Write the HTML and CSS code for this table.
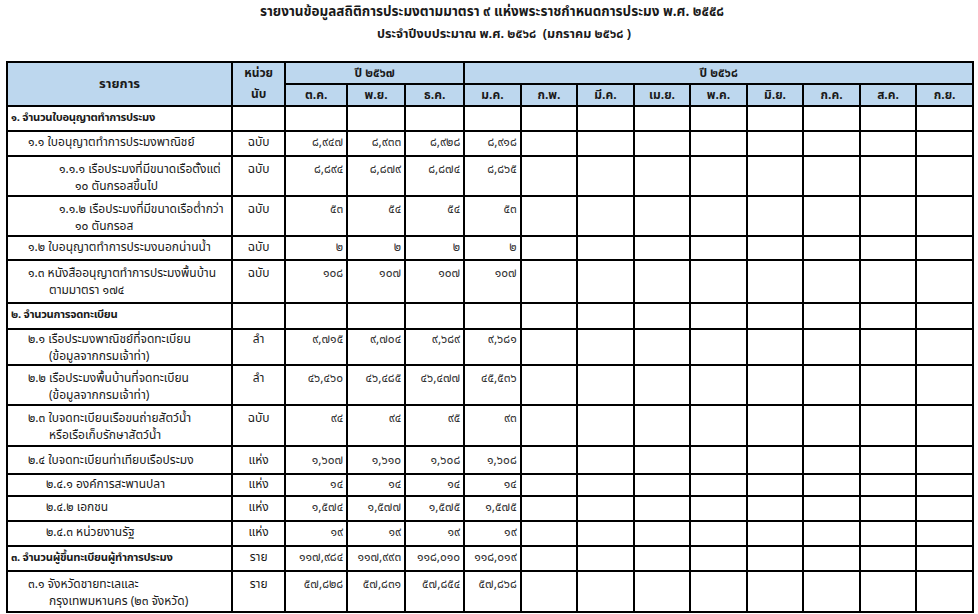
FILE: index.html
```html
<!DOCTYPE html>
<html lang="th">
<head>
<meta charset="utf-8">
<link rel="stylesheet" href="styles.css">
</head>
<body>
<div class="page">
  <div class="title">
    <div class="t1">รายงานข้อมูลสถิติการประมงตามมาตรา ๙ แห่งพระราชกำหนดการประมง พ.ศ. ๒๕๕๘</div>
    <div class="t2">ประจำปีงบประมาณ พ.ศ. ๒๕๖๘ &nbsp;(มกราคม ๒๕๖๘ )</div>
  </div>
  <table class="grid">
    <colgroup>
      <col class="c-item"><col class="c-unit">
      <col class="c-m1"><col class="c-m2"><col class="c-m3">
      <col class="c-m"><col class="c-m"><col class="c-m"><col class="c-m"><col class="c-m"><col class="c-m"><col class="c-m"><col class="c-m"><col class="c-m">
    </colgroup>
    <thead>
      <tr class="hr1">
        <th rowspan="2" class="h-item">รายการ</th>
        <th rowspan="2" class="h-unit"><span class="u1">หน่วย</span><span class="u2">นับ</span></th>
        <th colspan="3">ปี ๒๕๖๗</th>
        <th colspan="9">ปี ๒๕๖๘</th>
      </tr>
      <tr class="hr2">
        <th>ต.ค.</th><th>พ.ย.</th><th>ธ.ค.</th>
        <th>ม.ค.</th><th>ก.พ.</th><th>มี.ค.</th><th>เม.ย.</th><th>พ.ค.</th><th>มิ.ย.</th><th>ก.ค.</th><th>ส.ค.</th><th>ก.ย.</th>
      </tr>
    </thead>
    <tbody>
      <tr class="r-25">
        <td class="item sec">๑. จำนวนใบอนุญาตทำการประมง</td>
        <td class="unit"></td><td></td><td></td><td></td><td></td><td></td><td></td><td></td><td></td><td></td><td></td><td></td><td></td>
      </tr>
      <tr class="r-25">
        <td class="item l2">๑.๑ ใบอนุญาตทำการประมงพาณิชย์</td>
        <td class="unit">ฉบับ</td><td class="num">๘,๙๔๗</td><td class="num">๘,๙๓๓</td><td class="num">๘,๙๒๘</td><td class="num">๘,๙๑๘</td><td></td><td></td><td></td><td></td><td></td><td></td><td></td><td></td>
      </tr>
      <tr class="r-40">
        <td class="item l3"><span class="ln">๑.๑.๑ เรือประมงที่มีขนาดเรือตั้งแต่</span><span class="ln n3">๑๐ ตันกรอสขึ้นไป</span></td>
        <td class="unit">ฉบับ</td><td class="num">๘,๘๙๔</td><td class="num">๘,๘๗๙</td><td class="num">๘,๘๗๔</td><td class="num">๘,๘๖๕</td><td></td><td></td><td></td><td></td><td></td><td></td><td></td><td></td>
      </tr>
      <tr class="r-40">
        <td class="item l3"><span class="ln">๑.๑.๒ เรือประมงที่มีขนาดเรือต่ำกว่า</span><span class="ln n3">๑๐ ตันกรอส</span></td>
        <td class="unit">ฉบับ</td><td class="num">๕๓</td><td class="num">๕๔</td><td class="num">๕๔</td><td class="num">๕๓</td><td></td><td></td><td></td><td></td><td></td><td></td><td></td><td></td>
      </tr>
      <tr class="r-24">
        <td class="item l2">๑.๒ ใบอนุญาตทำการประมงนอกน่านน้ำ</td>
        <td class="unit">ฉบับ</td><td class="num">๒</td><td class="num">๒</td><td class="num">๒</td><td class="num">๒</td><td></td><td></td><td></td><td></td><td></td><td></td><td></td><td></td>
      </tr>
      <tr class="r-43">
        <td class="item l2"><span class="ln">๑.๓ หนังสืออนุญาตทำการประมงพื้นบ้าน</span><span class="ln n2">ตามมาตรา ๑๗๔</span></td>
        <td class="unit">ฉบับ</td><td class="num">๑๐๘</td><td class="num">๑๐๗</td><td class="num">๑๐๗</td><td class="num">๑๐๗</td><td></td><td></td><td></td><td></td><td></td><td></td><td></td><td></td>
      </tr>
      <tr class="r-26">
        <td class="item sec">๒. จำนวนการจดทะเบียน</td>
        <td class="unit"></td><td></td><td></td><td></td><td></td><td></td><td></td><td></td><td></td><td></td><td></td><td></td><td></td>
      </tr>
      <tr class="r-36">
        <td class="item l2"><span class="ln">๒.๑ เรือประมงพาณิชย์ที่จดทะเบียน</span><span class="ln n2">(ข้อมูลจากกรมเจ้าท่า)</span></td>
        <td class="unit">ลำ</td><td class="num">๙,๗๑๕</td><td class="num">๙,๗๐๔</td><td class="num">๙,๖๘๙</td><td class="num">๙,๖๘๑</td><td></td><td></td><td></td><td></td><td></td><td></td><td></td><td></td>
      </tr>
      <tr class="r-40">
        <td class="item l2"><span class="ln">๒.๒ เรือประมงพื้นบ้านที่จดทะเบียน</span><span class="ln n2">(ข้อมูลจากกรมเจ้าท่า)</span></td>
        <td class="unit">ลำ</td><td class="num">๔๖,๔๖๐</td><td class="num">๔๖,๔๘๕</td><td class="num">๔๖,๔๗๗</td><td class="num">๔๕,๕๓๖</td><td></td><td></td><td></td><td></td><td></td><td></td><td></td><td></td>
      </tr>
      <tr class="r-41">
        <td class="item l2"><span class="ln">๒.๓ ใบจดทะเบียนเรือขนถ่ายสัตว์น้ำ</span><span class="ln n2">หรือเรือเก็บรักษาสัตว์น้ำ</span></td>
        <td class="unit">ฉบับ</td><td class="num">๙๔</td><td class="num">๙๔</td><td class="num">๙๕</td><td class="num">๙๓</td><td></td><td></td><td></td><td></td><td></td><td></td><td></td><td></td>
      </tr>
      <tr class="r-28">
        <td class="item l2">๒.๔ ใบจดทะเบียนท่าเทียบเรือประมง</td>
        <td class="unit">แห่ง</td><td class="num">๑,๖๐๗</td><td class="num">๑,๖๑๐</td><td class="num">๑,๖๐๘</td><td class="num">๑,๖๐๘</td><td></td><td></td><td></td><td></td><td></td><td></td><td></td><td></td>
      </tr>
      <tr class="r-22">
        <td class="item l4">๒.๔.๑ องค์การสะพานปลา</td>
        <td class="unit">แห่ง</td><td class="num">๑๔</td><td class="num">๑๔</td><td class="num">๑๔</td><td class="num">๑๔</td><td></td><td></td><td></td><td></td><td></td><td></td><td></td><td></td>
      </tr>
      <tr class="r-25">
        <td class="item l4">๒.๔.๒ เอกชน</td>
        <td class="unit">แห่ง</td><td class="num">๑,๕๗๔</td><td class="num">๑,๕๗๗</td><td class="num">๑,๕๗๕</td><td class="num">๑,๕๗๕</td><td></td><td></td><td></td><td></td><td></td><td></td><td></td><td></td>
      </tr>
      <tr class="r-25">
        <td class="item l4">๒.๔.๓ หน่วยงานรัฐ</td>
        <td class="unit">แห่ง</td><td class="num">๑๙</td><td class="num">๑๙</td><td class="num">๑๙</td><td class="num">๑๙</td><td></td><td></td><td></td><td></td><td></td><td></td><td></td><td></td>
      </tr>
      <tr class="r-25">
        <td class="item sec">๓. จำนวนผู้ขึ้นทะเบียนผู้ทำการประมง</td>
        <td class="unit">ราย</td><td class="num">๑๑๗,๙๘๔</td><td class="num">๑๑๗,๙๙๓</td><td class="num">๑๑๘,๐๑๐</td><td class="num">๑๑๘,๐๑๙</td><td></td><td></td><td></td><td></td><td></td><td></td><td></td><td></td>
      </tr>
      <tr class="r-41">
        <td class="item l2"><span class="ln">๓.๑ จังหวัดชายทะเลและ</span><span class="ln n2">กรุงเทพมหานคร (๒๓ จังหวัด)</span></td>
        <td class="unit">ราย</td><td class="num">๕๗,๘๒๘</td><td class="num">๕๗,๘๓๑</td><td class="num">๕๗,๘๕๔</td><td class="num">๕๗,๘๖๘</td><td></td><td></td><td></td><td></td><td></td><td></td><td></td><td></td>
      </tr>
    </tbody>
  </table>
</div>
</body>
</html>
```
FILE: styles.css
```css
html, body {
  margin: 0;
  padding: 0;
  background: #ffffff;
}
body {
  font-family: Tahoma, "Noto Sans Thai", "Noto Sans", "DejaVu Sans", sans-serif;
  font-size: 12px;
  color: #1a1a1a;
}
.page {
  padding: 3px 0 0 6px;
  width: 970px;
}
.title {
  text-align: center;
  font-weight: bold;
  font-size: 13px;
  line-height: 21px;
  height: 59px;
  padding-left: 2px;
}
.t1 { font-size: 13.5px; margin-top: -1px; }
.t2 { font-size: 12.6px; padding-left: 24px; margin-top: 1px; }
.grid {
  border-collapse: collapse;
  table-layout: fixed;
  width: 968px;
}
.grid th, .grid td {
  border: 2px solid #000;
  padding: 0;
  overflow: hidden;
  white-space: nowrap;
  line-height: 17px;
}
.c-item { width: 225px; }
.c-unit { width: 53px; }
.c-m1 { width: 62px; }
.c-m2 { width: 58px; }
.c-m3 { width: 59px; }
.c-m { width: 56.5px; }
.grid th {
  background: #bdd7ee;
  font-weight: bold;
  text-align: center;
  vertical-align: middle;
}
.hr1 th { height: 19px; }
.hr2 th { height: 19px; }
.h-item { font-size: 13px; }
.h-unit .u1, .h-unit .u2 { display: block; line-height: 21px; }
.grid td { vertical-align: top; }
/* row pitch = height + padding-top + 2 */
.r-22 td { height: 19px; padding-top: 1px; }
.r-24 td { height: 20px; padding-top: 2px; }
.r-25 td { height: 21px; padding-top: 2px; }
.r-26 td { height: 22px; padding-top: 2px; }
.r-28 td { height: 21px; padding-top: 5px; }
.r-36 td { height: 33px; padding-top: 1px; line-height: 16.5px; }
.r-40 td { height: 34px; padding-top: 4px; }
.r-41 td { height: 35px; padding-top: 4px; }
.r-43 td { height: 37px; padding-top: 4px; }
.item { text-align: left; }
.sec {
  font-weight: bold;
  font-size: 11.2px;
  letter-spacing: -0.3px;
  padding-left: 3px !important;
}
.l2 { padding-left: 20px !important; }
.l3 { padding-left: 51px !important; }
.l4 { padding-left: 38px !important; }
.ln { display: block; }
.n2 { padding-left: 21px; }
.n3 { padding-left: 16px; }
.unit { text-align: center; }
.num {
  text-align: right;
  padding-right: 3px !important;
  color: #333;
}
```
